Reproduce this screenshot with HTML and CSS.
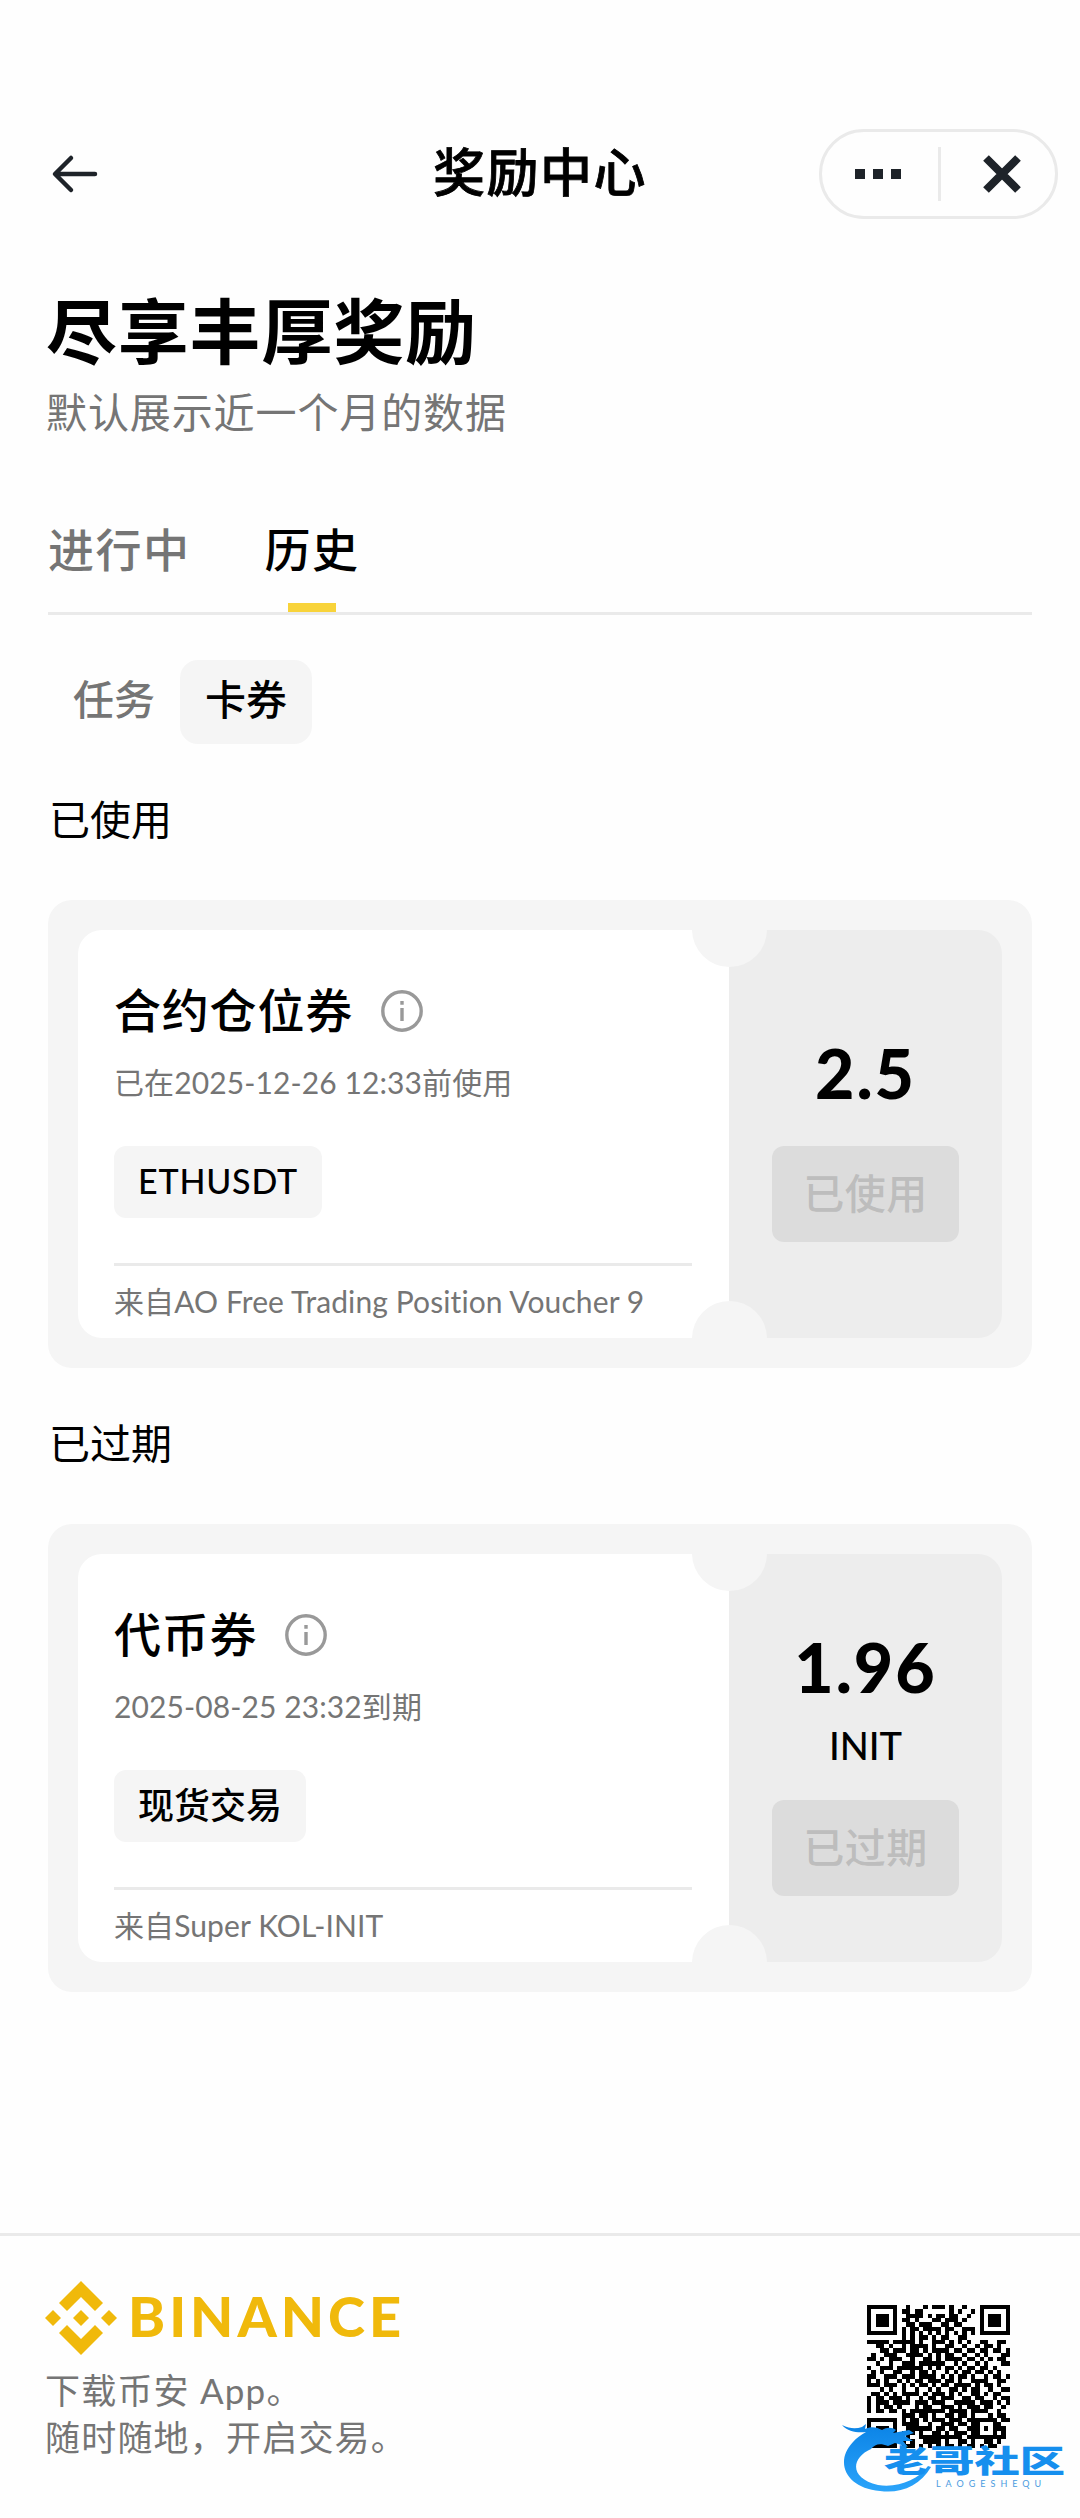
FILE: index.html
```html
<!DOCTYPE html>
<html lang="zh-CN">
  <head>
    <meta charset="UTF-8" />
    <meta name="viewport" content="width=device-width, initial-scale=1.0" />
    <title>奖励中心</title>
    <link rel="stylesheet" href="styles.css">
  </head>
  <body>
    <header class="navbar">
      <svg class="back" width="48" height="40" viewBox="0 0 48 40">
        <path d="M44 20H5M20 4L4 20l16 16" />
      </svg>
      <h1>奖励中心</h1>
      <div class="capsule">
        <svg class="dots" width="46" height="10" viewBox="0 0 46 10">
          <path d="M0 0h10v10H0zM18 0h10v10H18zM36 0h10v10H36z" />
        </svg>
        <span class="divider"></span>
        <svg class="close" width="38" height="38" viewBox="0 0 38 38">
          <path d="M3 3l32 32M35 3L3 35" />
        </svg>
      </div>
    </header>

    <main>
      <h2>尽享丰厚奖励</h2>
      <p class="subtitle">默认展示近一个月的数据</p>

      <nav class="tabs">
        <span class="tab">进行中</span>
        <span class="tab active">历史</span>
      </nav>
      <div class="filters">
        <span class="filter">任务</span>
        <span class="filter active">卡券</span>
      </div>

      <h3>已使用</h3>
      <section class="card">
        <div class="voucher">
          <div class="info">
            <div class="name">
              合约仓位券
              <svg class="tip" width="42" height="42" viewBox="0 0 42 42">
                <circle cx="21" cy="21" r="19.2" />
                <path d="M21 18v13M21 11v3.8" />
              </svg>
            </div>
            <p class="date">已在2025-12-26 12:33前使用</p>
            <span class="tag tag-pair">ETHUSDT</span>
            <p class="source">来自AO Free Trading Position Voucher 9</p>
          </div>
          <div class="amount">
            <div class="value">2.5</div>
            <button type="button" disabled>已使用</button>
          </div>
        </div>
      </section>

      <h3>已过期</h3>
      <section class="card">
        <div class="voucher">
          <div class="info">
            <div class="name">
              代币券
              <svg class="tip" width="42" height="42" viewBox="0 0 42 42">
                <circle cx="21" cy="21" r="19.2" />
                <path d="M21 18v13M21 11v3.8" />
              </svg>
            </div>
            <p class="date">2025-08-25 23:32到期</p>
            <span class="tag">现货交易</span>
            <p class="source">来自Super KOL-INIT</p>
          </div>
          <div class="amount">
            <div class="value">1.96</div>
            <div class="coin">INIT</div>
            <button type="button" disabled>已过期</button>
          </div>
        </div>
      </section>
    </main>

    <footer>
      <div class="download">
        <div class="logo">
          <svg width="72" height="74" viewBox="0 0 72 74">
            <path d="M36 0L58 22l-8 8-14-14-14 14-8-8zM36 74L14 52l8-8 14 14 14-14 8 8zM8 29l8 8-8 8-8-8zM64 29l8 8-8 8-8-8zM36 29l8 8-8 8-8-8z" />
          </svg>
          <span>BINANCE</span>
        </div>
        <p>下载币安 App。<br />随时随地，开启交易。</p>
      </div>
      <div class="qr">
        <svg id="qrcode" width="143" height="143" viewBox="0 0 33 33" shape-rendering="crispEdges"></svg>
        <svg class="watermark" width="232" height="84" viewBox="0 0 232 84">
          <defs>
            <linearGradient id="blue" x1="0" y1="0" x2="0" y2="1">
              <stop offset="0" stop-color="#0b83e6" />
              <stop offset="1" stop-color="#2ba4fa" />
            </linearGradient>
          </defs>
          <path fill="url(#blue)" d="M0 5c8 4 14 4 20 2l4-3-1 5c6-3 12-2 17 1 5-3 10-3 14 0l-3 3 16-3 5 3-9 3 8 5-10 0 5 6-13-4-7 3c-8-3-13-2-17 3C9 38 7 58 36 65c20 3 40-5 50-19l3 1C78 66 58 74 38 71 4 68-8 42 11 22c3-4 8-7 13-10-8 1-18 0-24-7z" />
          <text class="wm-name" transform="translate(42 52) scale(1.46 1)">老哥社区</text>
          <text class="wm-latin" x="94" y="67">LAOGESHEQU</text>
        </svg>
      </div>
    </footer>

    <script>
      const rows = [
        "111111100100010111010010001111111",
        "100000101101100000010100101000001",
        "101110100111101011011001001011101",
        "101110101101000110111010001011101",
        "101110100110111001101100001011101",
        "100000101011011110110011101000001",
        "111111101010101010101010101111111",
        "000000001010110101100110000000000",
        "111110111110100111010101001100110",
        "001101001011110100110010010110100",
        "000110111011010111101101101101101",
        "010011100111101010110010010100011",
        "110101110010011010111101101010110",
        "001001001110111111001010010100011",
        "100111011111101010110101101101000",
        "010100110010110100101011011010100",
        "110011101110111101010110100101101",
        "101010010101101110110100111100110",
        "111011101010110101101111010110100",
        "000101001001001010011010110010011",
        "011010101111010111010100110101100",
        "101101110100101101110011011001011",
        "101110111101110111001111101110101",
        "101011010001011001110101110110010",
        "101101101011111111011110111100100",
        "000000001110110100110110100010110",
        "111111101011010111011101111111011",
        "100000101111001001110110110001100",
        "101110100111111011011001110101110",
        "101110101110100110101110110001010",
        "101110100100111111111101111111110",
        "100000101010011110100110100110100",
        "111111101110101010110101101011000"
      ];

      let d = "";
      rows.forEach((row, y) => {
        [...row].forEach((cell, x) => {
          if (cell === "1") d += `M${x} ${y}h1v1h-1z`;
        });
      });
      document.getElementById("qrcode").innerHTML = `<path d="${d}" />`;
    </script>
  </body>
</html>
```
FILE: styles.css
```css
* {
  box-sizing: border-box;
}
body {
  font-family: Lato, "Noto Sans CJK SC", sans-serif;
  font-variant-ligatures: none;
  background-color: #fefefe;
  color: #000;
  margin: 0;
  height: 2518px;
  display: flex;
  flex-direction: column;
}
h1,
h2,
h3,
p {
  margin: 0;
}
.navbar {
  display: grid;
  grid-template-columns: 270px 1fr 270px;
  align-items: center;
  height: 90px;
  margin-top: 129px;
}
.back {
  margin-left: 51px;
  fill: none;
  stroke: #1e2329;
  stroke-width: 4.5;
  stroke-linecap: round;
  stroke-linejoin: round;
}
h1 {
  font-size: 52px;
  line-height: 86px;
  font-weight: 500;
  letter-spacing: 1.5px;
  text-align: center;
  padding-bottom: 4px;
  -webkit-text-stroke: 0.8px #000;
}
.capsule {
  display: flex;
  align-items: center;
  width: 239px;
  height: 90px;
  margin-left: 9px;
  padding-left: 33px;
  border: 3px solid #eaeaea;
  border-radius: 45px;
}
.dots {
  fill: #1e2329;
}
.divider {
  width: 3px;
  height: 54px;
  margin: 0 42px 0 37px;
  background-color: #eaeaea;
}
.close {
  stroke: #1e2329;
  stroke-width: 8;
}
main {
  padding: 66px 48px 0;
}
h2 {
  font-size: 71px;
  line-height: 92px;
  font-weight: 700;
  letter-spacing: 0.8px;
  margin-left: -2px;
}
.subtitle {
  font-size: 41px;
  line-height: 60px;
  letter-spacing: 0.9px;
  color: #757575;
  margin-top: 6px;
  margin-left: -2px;
}
.tabs {
  display: flex;
  gap: 74px;
  height: 115px;
  margin-top: 57px;
  border-bottom: 3px solid #eaeaea;
}
.tab {
  position: relative;
  font-size: 46px;
  line-height: 100px;
  letter-spacing: 1.5px;
  font-weight: 500;
  color: #757575;
}
.tab.active {
  color: #000;
}
.tab.active::after {
  content: "";
  position: absolute;
  left: 50%;
  bottom: 0;
  width: 48px;
  height: 9px;
  margin-left: -24px;
  background-color: #f8d33a;
}
.filters {
  display: flex;
  margin-top: 45px;
}
.filter {
  width: 132px;
  height: 84px;
  line-height: 80px;
  font-size: 41px;
  font-weight: 500;
  text-align: center;
  color: #757575;
  border-radius: 18px;
}
.filter.active {
  color: #000;
  background-color: #f5f5f5;
}
h3 {
  font-size: 41px;
  line-height: 60px;
  font-weight: 400;
  margin: 46px 0 50px 1px;
}
.card {
  height: 468px;
  padding: 30px;
  border-radius: 24px;
  background-color: #f5f5f5;
}
.voucher {
  position: relative;
  display: flex;
  height: 408px;
  border-radius: 24px;
  overflow: hidden;
}
/* ticket notches on the seam */
.voucher::before,
.voucher::after {
  content: "";
  position: absolute;
  left: 614px;
  width: 75px;
  height: 75px;
  border-radius: 50%;
  background-color: #f5f5f5;
}
.voucher::before {
  top: -38px;
}
.voucher::after {
  bottom: -38px;
}
.info {
  width: 651px;
  padding: 45px 37px 0 36px;
  background-color: #fff;
}
.name {
  display: flex;
  align-items: center;
  gap: 28px;
  height: 64px;
  font-size: 47px;
  letter-spacing: 0.8px;
  font-weight: 500;
}
.tip {
  fill: none;
  stroke: #999;
  stroke-width: 3.4;
  margin-top: 7px;
}
.date {
  font-size: 30px;
  line-height: 40px;
  letter-spacing: 0.1px;
  margin-top: 23px;
  color: #757575;
}
.tag {
  display: block;
  width: fit-content;
  height: 72px;
  line-height: 70px;
  margin-top: 44px;
  padding: 0 24px;
  font-size: 36px;
  font-weight: 500;
  border-radius: 12px;
  background-color: #f5f5f5;
}
.tag-pair {
  font-size: 34px;
  letter-spacing: 0.8px;
}
.source {
  font-size: 30px;
  line-height: 64px;
  letter-spacing: 0.1px;
  height: 75px;
  margin-top: 45px;
  padding-top: 3px;
  color: #757575;
  border-top: 3px solid #eaeaea;
}
.amount {
  flex: 1;
  display: flex;
  flex-direction: column;
  align-items: center;
  justify-content: center;
  background-color: #ededed;
}
.value {
  font-size: 68px;
  line-height: 94px;
  padding-bottom: 2px;
  font-weight: 900;
  letter-spacing: 2px;
}
.coin {
  font-size: 38px;
  line-height: 58px;
  padding-bottom: 2px;
  font-weight: 500;
}
button {
  width: 187px;
  height: 96px;
  margin-top: 24px;
  padding: 0 0 7px;
  font-family: inherit;
  font-size: 41px;
  font-weight: 500;
  letter-spacing: 0.5px;
  color: #bdbdbd;
  background-color: #dcdcdc;
  border: none;
  border-radius: 12px;
}
footer {
  display: flex;
  justify-content: space-between;
  margin-top: auto;
  height: 285px;
  padding: 45px 70px 0 45px;
  border-top: 3px solid #eaeaea;
}
.logo {
  display: flex;
  align-items: center;
  gap: 11px;
  height: 74px;
  fill: #f0b90b;
  color: #f0b90b;
  font-size: 56px;
  line-height: 68px;
  font-weight: 900;
  letter-spacing: 4px;
}
.logo span {
  padding-bottom: 5px;
}
.download p {
  font-size: 35px;
  line-height: 47px;
  letter-spacing: 1.2px;
  margin-top: 12px;
  color: #757575;
}
.qr {
  position: relative;
  width: 143px;
  margin-top: 24px;
}
.watermark {
  position: absolute;
  left: -25px;
  top: 115px;
}
.wm-name {
  font-family: "Noto Sans CJK SC", sans-serif;
  font-size: 31px;
  font-weight: 900;
  fill: #168fee;
}
.wm-latin {
  font-size: 9px;
  letter-spacing: 5px;
  fill: #4a9be0;
}
```
